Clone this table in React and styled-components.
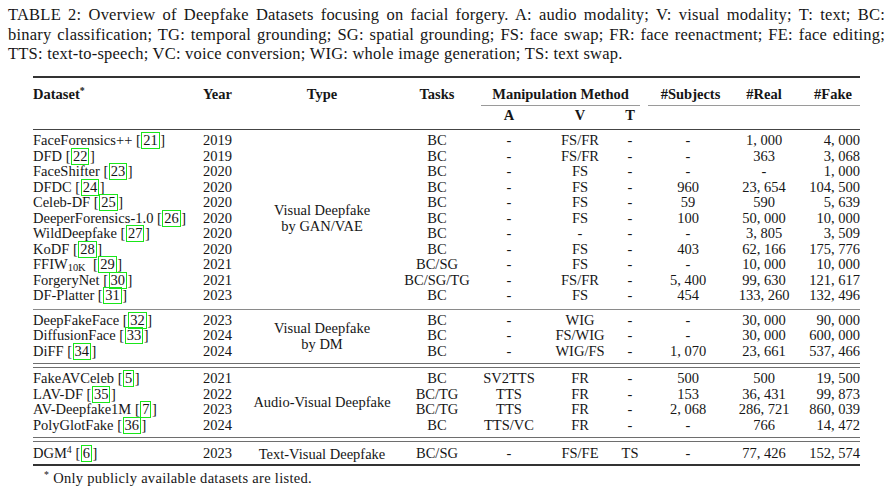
import React from 'react'
import styled, { createGlobalStyle } from 'styled-components'

const GlobalStyle = createGlobalStyle`
  html, body {
    margin: 0;
    background: #fff;
  }
  body {
    font-family: "Liberation Serif", "Times New Roman", serif;
    color: #161616;
  }
`

const Page = styled.div`
  width: 895px;
  padding-top: 5px;
`

const Caption = styled.div`
  width: 877px;
  margin-left: 8px;
  font-size: 16.5px;
  letter-spacing: 0.22px;
  line-height: 19.5px;
`

const CaptionLine = styled.div`
  white-space: nowrap;
  text-align: ${(props) => (props.$justify ? 'justify' : 'left')};
  text-align-last: ${(props) => (props.$justify ? 'justify' : 'left')};
  ${(props) => props.$justify && 'white-space: normal;'}
`

const Table = styled.table`
  margin: 12.5px 0 0 33px;
  width: 827px;
  table-layout: fixed;
  border-collapse: collapse;
  border-spacing: 0;
  font-size: 14.5px;
`

const Th = styled.th`
  padding: ${(props) => (props.$second ? '1px 0 6px' : '8px 0 0')};
  line-height: 16px;
  font-weight: bold;
  white-space: nowrap;
  text-align: ${(props) => props.$align || 'center'};
  vertical-align: top;
`

const Cmid = styled.div`
  padding: 0 0 3px ${(props) => props.$pl || 0}px;
  margin: 0 ${(props) => props.$mr || 0}px 0 ${(props) => props.$ml || 0}px;
  border-bottom: 1px solid #9a9a9a;
`

const Td = styled.td`
  padding: 0;
  line-height: 15.5px;
  white-space: nowrap;
  text-align: ${(props) => props.$align || 'center'};
  vertical-align: middle;
`

const TypeCell = styled.td`
  padding: 0;
  line-height: 16px;
  text-align: center;
  vertical-align: middle;
  white-space: nowrap;
`

const RuleCell = styled.td`
  padding: 0;
`

const Rule = styled.div`
  margin: ${(props) => props.$above}px 0 ${(props) => props.$below}px;
  height: ${(props) => (props.$double ? 1 : props.$weight)}px;
  background: ${(props) => props.$color};
  ${(props) =>
    props.$double &&
    `box-shadow: 0 4px 0 ${props.$color}; margin-bottom: ${props.$below + 4}px;`}
`

const Box = styled.span`
  display: inline-block;
  border: 1.4px solid #19e619;
  line-height: 15px;
  padding: 0 1px;
  margin: -2px 0.5px;
`

const Sup = styled.sup`
  font-size: 0.68em;
  line-height: 0;
  vertical-align: 0.5em;
`

const Sub = styled.sub`
  font-size: 0.72em;
  line-height: 0;
  vertical-align: -0.15em;
`

const Footnote = styled.div`
  margin: 4px 0 0 44px;
  font-size: 14.5px;
  letter-spacing: 0.3px;
  line-height: 16px;
`

const widths = [170, 42, 154, 76, 68, 74, 26, 90, 62, 65]
const aligns = ['left', 'left', 'center', 'center', 'center', 'center', 'center', 'center', 'center', 'right']

function Cite({ n }) {
  return (
    <>
      [<Box>{n}</Box>]
    </>
  )
}

const groups = [
  {
    type: ['Visual Deepfake', 'by GAN/VAE'],
    rows: [
      ['FaceForensics++', 21, '2019', 'BC', '-', 'FS/FR', '-', '-', '1, 000', '4, 000'],
      ['DFD', 22, '2019', 'BC', '-', 'FS/FR', '-', '-', '363', '3, 068'],
      ['FaceShifter', 23, '2020', 'BC', '-', 'FS', '-', '-', '-', '1, 000'],
      ['DFDC', 24, '2020', 'BC', '-', 'FS', '-', '960', '23, 654', '104, 500'],
      ['Celeb-DF', 25, '2020', 'BC', '-', 'FS', '-', '59', '590', '5, 639'],
      ['DeeperForensics-1.0', 26, '2020', 'BC', '-', 'FS', '-', '100', '50, 000', '10, 000'],
      ['WildDeepfake', 27, '2020', 'BC', '-', '-', '-', '-', '3, 805', '3, 509'],
      ['KoDF', 28, '2020', 'BC', '-', 'FS', '-', '403', '62, 166', '175, 776'],
      [
        <>
          FFIW<Sub>10K</Sub>{'\u00a0'}
        </>,
        29, '2021', 'BC/SG', '-', 'FS', '-', '-', '10, 000', '10, 000',
      ],
      ['ForgeryNet', 30, '2021', 'BC/SG/TG', '-', 'FS/FR', '-', '5, 400', '99, 630', '121, 617'],
      ['DF-Platter', 31, '2023', 'BC', '-', 'FS', '-', '454', '133, 260', '132, 496'],
    ],
    after: { above: 5, below: 3, weight: 1, color: '#8a8a8a' },
  },
  {
    type: ['Visual Deepfake', 'by DM'],
    rows: [
      ['DeepFakeFace', 32, '2023', 'BC', '-', 'WIG', '-', '-', '30, 000', '90, 000'],
      ['DiffusionFace', 33, '2024', 'BC', '-', 'FS/WIG', '-', '-', '30, 000', '600, 000'],
      ['DiFF', 34, '2024', 'BC', '-', 'WIG/FS', '-', '1, 070', '23, 661', '537, 466'],
    ],
    after: { above: 3.5, below: 3.5, double: true, color: '#6e6e6e' },
  },
  {
    type: ['Audio-Visual Deepfake'],
    rows: [
      ['FakeAVCeleb', 5, '2021', 'BC', 'SV2TTS', 'FR', '-', '500', '500', '19, 500'],
      ['LAV-DF', 35, '2022', 'BC/TG', 'TTS', 'FR', '-', '153', '36, 431', '99, 873'],
      ['AV-Deepfake1M', 7, '2023', 'BC/TG', 'TTS', 'FR', '-', '2, 068', '286, 721', '860, 039'],
      ['PolyGlotFake', 36, '2024', 'BC', 'TTS/VC', 'FR', '-', '-', '766', '14, 472'],
    ],
    after: { above: 3.5, below: 4, double: true, color: '#6e6e6e' },
  },
  {
    type: ['Text-Visual Deepfake'],
    rows: [
      [
        <>
          DGM<Sup>4</Sup>
        </>,
        6, '2023', 'BC/SG', '-', 'FS/FE', 'TS', '-', '77, 426', '152, 574',
      ],
    ],
    after: { above: 2.5, below: 0, weight: 2, color: '#333' },
  },
]

function RuleRow({ above, below, weight, color, double }) {
  return (
    <tr>
      <RuleCell colSpan={10}>
        <Rule $above={above} $below={below} $weight={weight} $color={color} $double={double} />
      </RuleCell>
    </tr>
  )
}

function Group({ group }) {
  return (
    <>
      {group.rows.map((row, i) => {
        const [name, cite, ...rest] = row
        return (
          <tr key={i}>
            <Td $align="left">
              {name} <Cite n={cite} />
            </Td>
            <Td $align="left">{rest[0]}</Td>
            {i === 0 && (
              <TypeCell rowSpan={group.rows.length}>
                {group.type.map((t) => (
                  <div key={t}>{t}</div>
                ))}
              </TypeCell>
            )}
            {rest.slice(1).map((v, j) => (
              <Td key={j} $align={aligns[j + 3]}>
                {v}
              </Td>
            ))}
          </tr>
        )
      })}
      <RuleRow {...group.after} />
    </>
  )
}

export default function App() {
  return (
    <Page>
      <GlobalStyle />
      <Caption>
        <CaptionLine $justify>
          TABLE 2: Overview of Deepfake Datasets focusing on facial forgery. A: audio modality; V: visual modality; T: text; BC:
        </CaptionLine>
        <CaptionLine $justify>
          binary classification; TG: temporal grounding; SG: spatial grounding; FS: face swap; FR: face reenactment; FE: face editing;
        </CaptionLine>
        <CaptionLine>TTS: text-to-speech; VC: voice conversion; WIG: whole image generation; TS: text swap.</CaptionLine>
      </Caption>
      <Table>
        <colgroup>
          {widths.map((w, i) => (
            <col key={i} style={{ width: w }} />
          ))}
        </colgroup>
        <tbody>
          <RuleRow above={0} below={0} weight={2} color="#333" />
          <tr>
            <Th $align="left">
              Dataset<Sup>*</Sup>
            </Th>
            <Th $align="left">Year</Th>
            <Th>Type</Th>
            <Th>Tasks</Th>
            <Th colSpan={3}>
              <Cmid $ml={6} $mr={3}>Manipulation Method</Cmid>
            </Th>
            <Th>
              <Cmid $ml={5}>#Subjects</Cmid>
            </Th>
            <Th>
              <Cmid>#Real</Cmid>
            </Th>
            <Th>
              <Cmid $pl={11}>#Fake</Cmid>
            </Th>
          </tr>
          <tr>
            <Th $second />
            <Th $second />
            <Th $second />
            <Th $second />
            <Th $second>A</Th>
            <Th $second>V</Th>
            <Th $second>T</Th>
            <Th $second />
            <Th $second />
            <Th $second />
          </tr>
          <RuleRow above={0} below={3} weight={1} color="#444" />
          {groups.map((g, i) => (
            <Group key={i} group={g} />
          ))}
        </tbody>
      </Table>
      <Footnote>
        <Sup>*</Sup> Only publicly available datasets are listed.
      </Footnote>
    </Page>
  )
}
